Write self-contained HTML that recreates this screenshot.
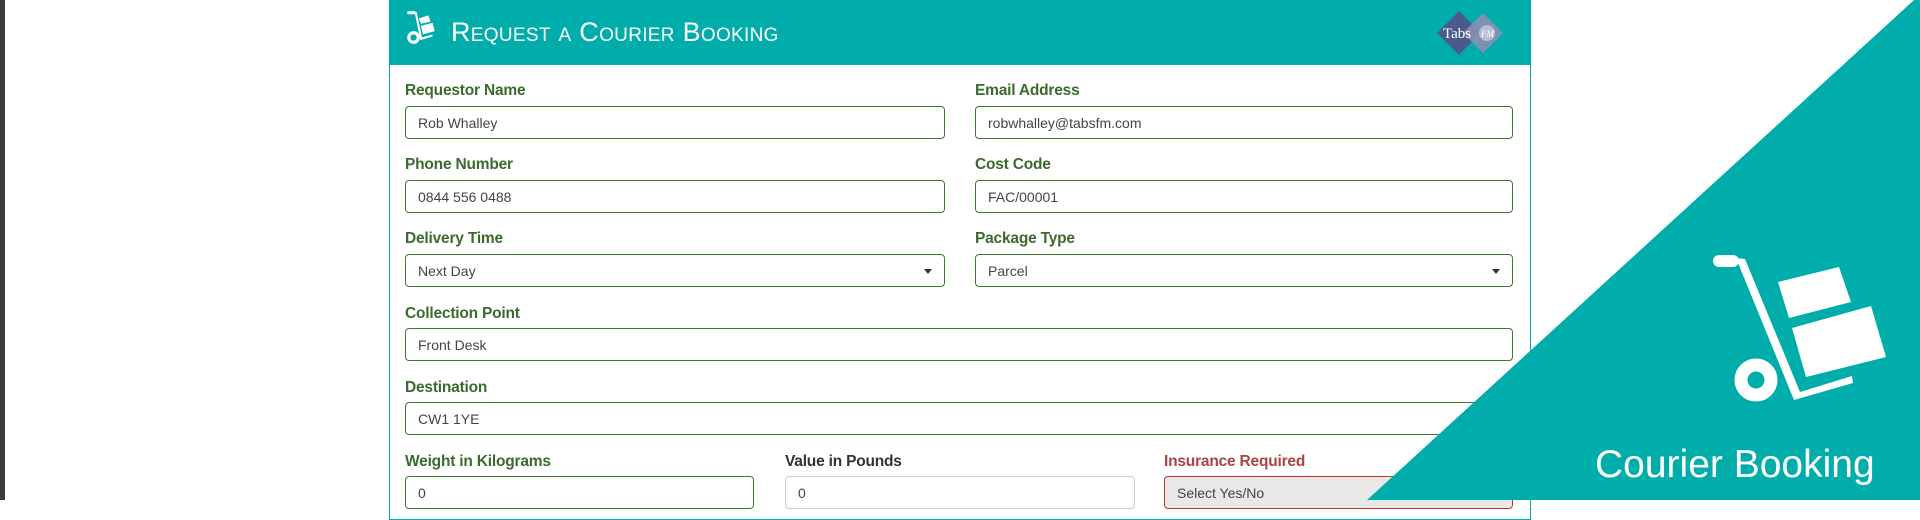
<!DOCTYPE html>
<html><head><style>
*{box-sizing:border-box;margin:0;padding:0}
body{width:1920px;height:500px;overflow:hidden;background:#fff;position:relative;font-family:"Liberation Sans",Arial,sans-serif}
.bar{position:absolute;left:0;top:0;width:5px;height:500px;background:#3a3a3a}
.panel{position:absolute;left:389px;top:0;width:1142px;height:520px;border:1px solid #00ADAA;border-top:none}
.head{position:absolute;left:389px;top:0;width:1142px;height:65px;background:#00ADAA}
.title{position:absolute;left:451px;top:17px;color:#fff;font-size:27px;font-variant:small-caps;letter-spacing:0.3px}
.lbl{position:absolute;font-size:15.5px;font-weight:bold;color:#3b6a2e;letter-spacing:-0.2px}
.inp{position:absolute;height:33px;border:1px solid #3c7a30;border-radius:4px;font-size:14px;color:#444;padding:8px 12px;background:#fff}
.car{position:absolute;right:12px;top:14px;width:0;height:0;border-left:4px solid transparent;border-right:4px solid transparent;border-top:5px solid #333}
</style></head><body>
<div class="bar"></div>
<div class="panel"></div>
<div class="head"></div>
<svg style="position:absolute;left:404px;top:9px" width="36" height="38" viewBox="0 0 32 36" fill="#fff">
<rect x="2" y="2" width="8" height="3" rx="1.5"/><path d="M9 3 L11 3 L16 27 L26 24 L26 26 L14.5 29.5 Z"/>
<path d="M13 9 L22 6 L24 12 L15 14Z"/><path d="M15 16 L26 13 L28 21 L17 24Z"/>
<circle cx="8" cy="27" r="4.5" fill="none" stroke="#fff" stroke-width="3"/></svg>
<div class="title">Request a Courier Booking</div>
<svg style="position:absolute;left:1437px;top:10px" width="66" height="46" viewBox="0 0 66 44">
<polygon points="22,0 44,22 22,44 0,22" fill="#4b5a8c"/>
<polygon points="46,2 66,22 46,42 26,22" fill="#8a8fb0" opacity="0.9"/>
<circle cx="50" cy="22" r="8" fill="#b8bcd4"/>
<text x="6" y="27" font-family="Liberation Serif" font-size="15" fill="#fff">Tabs</text>
<text x="44" y="26" font-family="Liberation Serif" font-size="9" font-style="italic" fill="#fff">FM</text></svg>

<div class="lbl" style="left:405px;top:82px">Requestor Name</div>
<div class="inp" style="left:405px;top:106px;width:540px">Rob Whalley</div>
<div class="lbl" style="left:975px;top:82px">Email Address</div>
<div class="inp" style="left:975px;top:106px;width:538px">robwhalley@tabsfm.com</div>

<div class="lbl" style="left:405px;top:156px">Phone Number</div>
<div class="inp" style="left:405px;top:180px;width:540px">0844 556 0488</div>
<div class="lbl" style="left:975px;top:156px">Cost Code</div>
<div class="inp" style="left:975px;top:180px;width:538px">FAC/00001</div>

<div class="lbl" style="left:405px;top:230px">Delivery Time</div>
<div class="inp" style="left:405px;top:254px;width:540px">Next Day<div class="car"></div></div>
<div class="lbl" style="left:975px;top:230px">Package Type</div>
<div class="inp" style="left:975px;top:254px;width:538px">Parcel<div class="car"></div></div>

<div class="lbl" style="left:405px;top:305px">Collection Point</div>
<div class="inp" style="left:405px;top:328px;width:1108px">Front Desk</div>

<div class="lbl" style="left:405px;top:379px">Destination</div>
<div class="inp" style="left:405px;top:402px;width:1108px">CW1 1YE</div>

<div class="lbl" style="left:405px;top:453px">Weight in Kilograms</div>
<div class="inp" style="left:405px;top:476px;width:349px">0</div>
<div class="lbl" style="left:785px;top:453px;color:#333">Value in Pounds</div>
<div class="inp" style="left:785px;top:476px;width:350px;border-color:#ccc">0</div>
<div class="lbl" style="left:1164px;top:453px;color:#a94442">Insurance Required</div>
<div class="inp" style="left:1164px;top:476px;width:349px;border-color:#c9302c;background:#e8e8e8">Select Yes/No</div>

<svg style="position:absolute;left:0;top:0" width="1920" height="500">
<polygon points="1367,500 1914,0 1920,0 1920,500" fill="#00ADAA"/>
<g fill="#fff">
<rect x="1713" y="255" width="26" height="12" rx="6"/>
<path d="M1736 258 L1745 259 L1800 392 L1852 376 L1853 383 L1794 400 Z"/>
<path d="M1778 282 L1839 267 L1851 302 L1789 318Z"/>
<path d="M1792 328 L1871 306 L1886 357 L1806 377Z"/>
<circle cx="1756" cy="380" r="15" fill="none" stroke="#fff" stroke-width="13"/>
</g>
<text x="1595" y="477" font-family="Liberation Sans" font-size="39" fill="#fff">Courier Booking</text>
</svg>
</body></html>
